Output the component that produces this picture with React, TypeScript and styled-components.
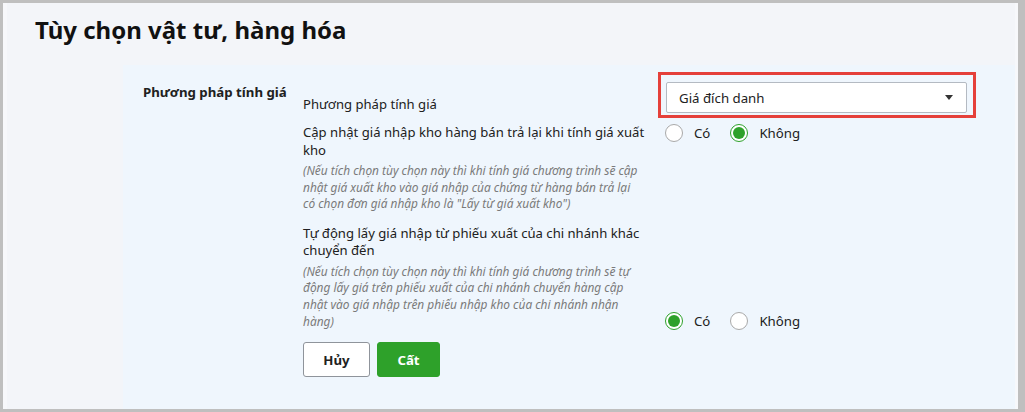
import React from "react";
import styled, { createGlobalStyle } from "styled-components";

const Global = createGlobalStyle`
  html, body { margin: 0; padding: 0; }
  body {
    background: #bfbfbf;
    font-family: "Noto Sans", "Open Sans", Arial, sans-serif;
    color: #212121;
  }
  * { box-sizing: border-box; }
`;

const Frame = styled.div`
  width: 1025px;
  height: 412px;
  padding: 3px 7px 3px 3px;
  background: #bfbfbf;
`;

const Window = styled.div`
  height: 406px;
  background: #f3f5f9;
  border-left: 4px solid #f7f8fb;
  border-right: 3px solid #f7f8fb;
  display: flex;
  flex-direction: column;
  overflow: hidden;
`;

const Title = styled.h1`
  margin: 0;
  padding: 11px 0 0 28px;
  height: 62px;
  font-size: 24px;
  line-height: 32px;
  font-weight: 700;
  color: #111;
`;

const Panel = styled.div`
  flex: 1;
  margin-left: 116px;
  background: #eff6fd;
  display: grid;
  grid-template-columns: 160px 1fr;
  padding: 7px 0 0 20px;
`;

const SectionLabel = styled.div`
  font-size: 13.25px;
  font-weight: 700;
  line-height: 18px;
  margin-top: 11px;
`;

const Options = styled.div`
  display: flex;
  flex-direction: column;
`;

const OptionRow = styled.div<{ $mt?: number }>`
  display: grid;
  grid-template-columns: 355px 318px;
  margin-top: ${(p) => p.$mt ?? 0}px;
`;

const TextCol = styled.div<{ $pt?: number }>`
  padding-top: ${(p) => p.$pt ?? 0}px;
  padding-right: 13px;
`;

const Main = styled.div`
  font-size: 13.1px;
  line-height: 17.5px;
  color: #212121;
`;

const Note = styled.div`
  font-size: 11.9px;
  line-height: 16.6px;
  font-style: italic;
  color: #7a7a7a;
  margin-top: 3px;
`;

const Highlight = styled.div`
  border: 3px solid #e5403a;
  padding: 7px 6px 3px 5px;
  height: 46px;
  width: 318px;
`;

const Select = styled.div`
  height: 31px;
  background: #fff;
  border: 1px solid #b4bac2;
  border-radius: 2px;
  display: flex;
  align-items: center;
  justify-content: space-between;
  padding: 0 13px 0 12px;
  font-size: 13.25px;
  color: #212121;
`;

const Caret = styled.span`
  width: 0;
  height: 0;
  border-left: 4.5px solid transparent;
  border-right: 4.5px solid transparent;
  border-top: 5px solid #333;
`;

const RadioGroup = styled.div<{ $end?: boolean }>`
  display: flex;
  align-items: center;
  padding-left: 7px;
  align-self: ${(p) => (p.$end ? "end" : "start")};
  height: 18px;
  margin-bottom: ${(p) => (p.$end ? "-1px" : "0")};
`;

const RadioItem = styled.label`
  display: flex;
  align-items: center;
  font-size: 13.25px;
  color: #212121;
  margin-right: 20px;
`;

const Circle = styled.span<{ $on?: boolean }>`
  width: 18px;
  height: 18px;
  border-radius: 50%;
  background: #fff;
  border: 1px solid ${(p) => (p.$on ? "#2ea12a" : "#a9a9a9")};
  display: inline-flex;
  align-items: center;
  justify-content: center;
  margin-right: 11px;
  &::after {
    content: "";
    display: ${(p) => (p.$on ? "block" : "none")};
    width: 12px;
    height: 12px;
    border-radius: 50%;
    background: #2ea12a;
  }
`;

const Buttons = styled.div`
  display: flex;
  gap: 7px;
  margin-top: 13px;
`;

const Button = styled.button<{ $primary?: boolean }>`
  height: 35px;
  padding: 0;
  width: ${(p) => (p.$primary ? 63 : 67)}px;
  border-radius: 3px;
  font-family: inherit;
  font-size: 13.25px;
  font-weight: 700;
  border: 1px solid ${(p) => (p.$primary ? "#2ea12a" : "#8f949b")};
  background: ${(p) => (p.$primary ? "#2ea12a" : "#fff")};
  color: ${(p) => (p.$primary ? "#fff" : "#212121")};
`;

function Radio({ on, label }: { on?: boolean; label: string }) {
  return (
    <RadioItem>
      <Circle $on={on} />
      {label}
    </RadioItem>
  );
}

export default function App() {
  return (
    <>
      <Global />
      <Frame>
        <Window>
          <Title>Tùy chọn vật tư, hàng hóa</Title>
          <Panel>
            <SectionLabel>Phương pháp tính giá</SectionLabel>
            <Options>
              <OptionRow>
                <TextCol $pt={24}>
                  <Main>Phương pháp tính giá</Main>
                </TextCol>
                <Highlight>
                  <Select>
                    <span>Giá đích danh</span>
                    <Caret />
                  </Select>
                </Highlight>
              </OptionRow>
              <OptionRow $mt={6}>
                <TextCol>
                  <Main>Cập nhật giá nhập kho hàng bán trả lại khi tính giá xuất kho</Main>
                  <Note>
                    (Nếu tích chọn tùy chọn này thì khi tính giá chương trình sẽ cập nhật giá xuất kho vào giá nhập của chứng từ hàng bán trả lại có chọn đơn giá nhập kho là "Lấy từ giá xuất kho")
                  </Note>
                </TextCol>
                <RadioGroup>
                  <Radio label="Có" />
                  <Radio on label="Không" />
                </RadioGroup>
              </OptionRow>
              <OptionRow $mt={13}>
                <TextCol>
                  <Main>Tự động lấy giá nhập từ phiếu xuất của chi nhánh khác chuyển đến</Main>
                  <Note>
                    (Nếu tích chọn tùy chọn này thì khi tính giá chương trình sẽ tự động lấy giá trên phiếu xuất của chi nhánh chuyển hàng cập nhật vào giá nhập trên phiếu nhập kho của chi nhánh nhận hàng)
                  </Note>
                </TextCol>
                <RadioGroup $end>
                  <Radio on label="Có" />
                  <Radio label="Không" />
                </RadioGroup>
              </OptionRow>
              <Buttons>
                <Button>Hủy</Button>
                <Button $primary>Cất</Button>
              </Buttons>
            </Options>
          </Panel>
        </Window>
      </Frame>
    </>
  );
}
